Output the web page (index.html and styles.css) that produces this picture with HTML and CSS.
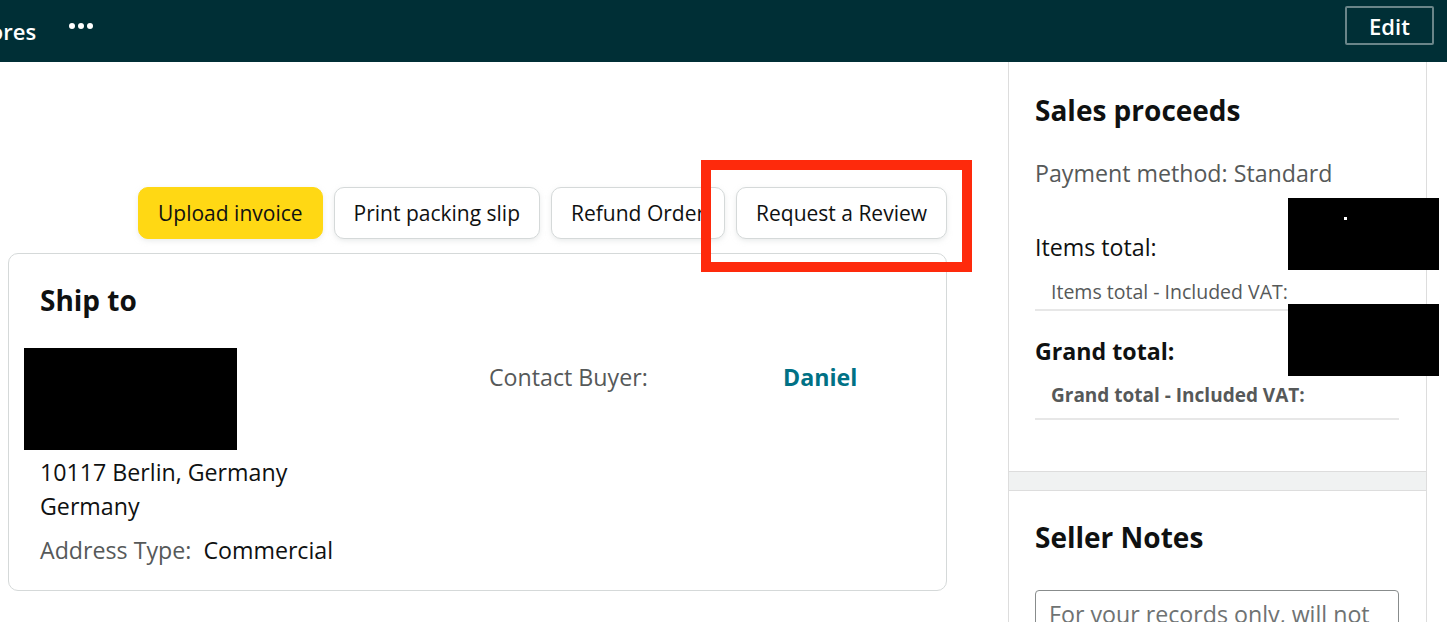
FILE: index.html
```html
<!DOCTYPE html>
<html lang="en">
<head>
  <meta charset="UTF-8" />
  <meta name="viewport" content="width=device-width, initial-scale=1.0"/>
  <title>Order details</title>
  <link rel="stylesheet" href="styles.css">
</head>
<body>
  <header class="topbar">
    <nav class="topnav">
      <span class="nav-item">Stores</span>
      <span class="nav-more" aria-label="More">
        <svg width="26" height="8" viewBox="0 0 26 8"><circle cx="4" cy="4" r="3" fill="#fff"/><circle cx="13" cy="4" r="3" fill="#fff"/><circle cx="22" cy="4" r="3" fill="#fff"/></svg>
      </span>
    </nav>
    <button class="edit-btn">Edit</button>
  </header>

  <main class="page">
    <section class="main-col">
      <div class="actions">
        <button class="btn btn-primary">Upload invoice</button>
        <button class="btn">Print packing slip</button>
        <button class="btn">Refund Order</button>
        <button class="btn">Request a Review</button>
      </div>

      <div class="card">
        <h2 class="card-title">Ship to</h2>
        <div class="ship-grid">
          <div class="address">
            <div class="redacted redacted-name"></div>
            <div class="addr-line addr-city">10117 Berlin, Germany</div>
            <div class="addr-line">Germany</div>
            <div class="addr-type"><span class="muted">Address Type:</span>&nbsp; Commercial</div>
          </div>
          <div class="contact-label muted">Contact Buyer:</div>
          <div class="contact-name"><a href="#">Daniel</a></div>
        </div>
      </div>

      <!-- annotation box from the screenshot -->
      <div class="highlight"></div>
    </section>

    <aside class="side-col">
      <div class="side-block proceeds">
        <h2 class="side-title">Sales proceeds</h2>
        <p class="pay-method">Payment method: Standard</p>

        <div class="total-row">Items total:</div>
        <div class="sub-row">Items total - Included VAT:</div>

        <div class="total-row grand">Grand total:</div>
        <div class="sub-row grand-sub">Grand total - Included VAT:</div>

        <div class="redacted redacted-items"><span class="speck"></span></div>
        <div class="redacted redacted-grand"></div>
      </div>

      <div class="side-gap"></div>

      <div class="side-block notes">
        <h2 class="side-title">Seller Notes</h2>
        <textarea class="notes-input" placeholder="For your records only, will not be shown to the buyer"></textarea>
      </div>
    </aside>
  </main>
</body>
</html>
```

FILE: styles.css
```css
* {
  box-sizing: border-box;
}

body {
  margin: 0;
  font-family: 'Open Sans', 'Noto Sans', sans-serif;
  font-size: 23.2px;
  color: #0f1111;
  background: #fff;
  overflow: hidden;
}

h2, p {
  margin: 0;
}

.muted {
  color: #565959;
}

/* top bar */
.topbar {
  height: 62px;
  background: #002f36;
  display: flex;
  align-items: flex-start;
  justify-content: space-between;
  padding: 6px 13px 0 0;
}

.topnav {
  display: flex;
  align-items: center;
  gap: 32px;
  height: 50px;
}

.nav-item {
  color: #fff;
  font-weight: 600;
  font-size: 22px;
  margin-left: -31px;
}

.nav-more {
  display: flex;
  margin-top: -10px;
}

.edit-btn {
  width: 89px;
  height: 39px;
  background: transparent;
  border: 2px solid #6a8589;
  border-radius: 2px;
  color: #fff;
  font-family: inherit;
  font-size: 22px;
  font-weight: 600;
  padding: 0;
}

/* page layout */
.page {
  display: grid;
  grid-template-columns: 1fr 419px;
  padding-right: 20px;
  height: 560px;
}

.main-col {
  position: relative;
  padding: 125px 61px 0 8px;
}

.actions {
  display: flex;
  justify-content: flex-end;
  gap: 11px;
  margin-bottom: 14px;
}

.btn {
  height: 52px;
  padding: 0 19px;
  border: 1px solid #d5d9d9;
  border-radius: 10px;
  background: #fff;
  font-family: inherit;
  font-size: 21px;
  color: #0f1111;
  box-shadow: 0 2px 5px rgba(213, 217, 217, 0.5);
}

.btn-primary {
  background: #ffd814;
  border-color: #ffd814;
}

.card {
  border: 1px solid #d5d9d9;
  border-radius: 10px;
  padding: 28px 31px 23px;
}

.card-title {
  font-size: 28px;
  line-height: 36px;
  font-weight: 700;
}

.ship-grid {
  display: grid;
  grid-template-columns: 449px 294px 1fr;
  margin-top: 30px;
  line-height: 34px;
}

.redacted {
  background: #000;
}

.redacted-name {
  width: 213px;
  height: 102px;
  margin-left: -16px;
}

.addr-city {
  margin-top: 5px;
}

.addr-type {
  margin-top: 10px;
}

.contact-label,
.contact-name {
  margin-top: 12px;
}

.contact-name a {
  color: #007185;
  font-weight: 700;
  text-decoration: none;
}

.highlight {
  position: absolute;
  left: 701px;
  top: 98px;
  width: 271px;
  height: 112px;
  border: 10px solid #fe2a0c;
}

/* right column */
.side-col {
  border-left: 1px solid #dddddd;
  border-right: 1px solid #dddddd;
}

.side-block {
  padding: 30px 27px 0 26px;
}

.proceeds {
  position: relative;
  height: 409px;
}

.side-title {
  font-size: 28px;
  line-height: 36px;
  font-weight: 700;
}

.pay-method {
  margin-top: 28px;
  line-height: 34px;
  color: #565959;
}

.total-row {
  margin-top: 40px;
  line-height: 34px;
}

.total-row.grand {
  margin-top: 23px;
  font-weight: 700;
}

.sub-row {
  margin-top: 15px;
  padding: 0 0 4px 16px;
  font-size: 19.5px;
  line-height: 26px;
  color: #565959;
  border-bottom: 2px solid #e7e7e7;
}

.sub-row.grand-sub {
  margin-top: 14px;
  padding-bottom: 10px;
  font-size: 19px;
  font-weight: 700;
}

.redacted-items,
.redacted-grand {
  position: absolute;
  left: 279px;
  width: 151px;
  height: 72px;
}

.redacted-items {
  top: 136px;
}

.redacted-grand {
  top: 242px;
}

.speck {
  position: absolute;
  left: 56px;
  top: 19px;
  width: 3px;
  height: 3px;
  background: #fff;
}

.side-gap {
  height: 20px;
  background: #f0f2f2;
  border-top: 1px solid #dddddd;
  border-bottom: 1px solid #dddddd;
}

.notes {
  padding-top: 28px;
}

.notes-input {
  display: block;
  width: 100%;
  height: 90px;
  margin-top: 35px;
  padding: 8px 13px;
  border: 1px solid #888c8c;
  border-radius: 4px;
  font-family: inherit;
  font-size: 23.2px;
  line-height: 30px;
  resize: none;
}

.notes-input::placeholder {
  color: #6f7373;
}
```
